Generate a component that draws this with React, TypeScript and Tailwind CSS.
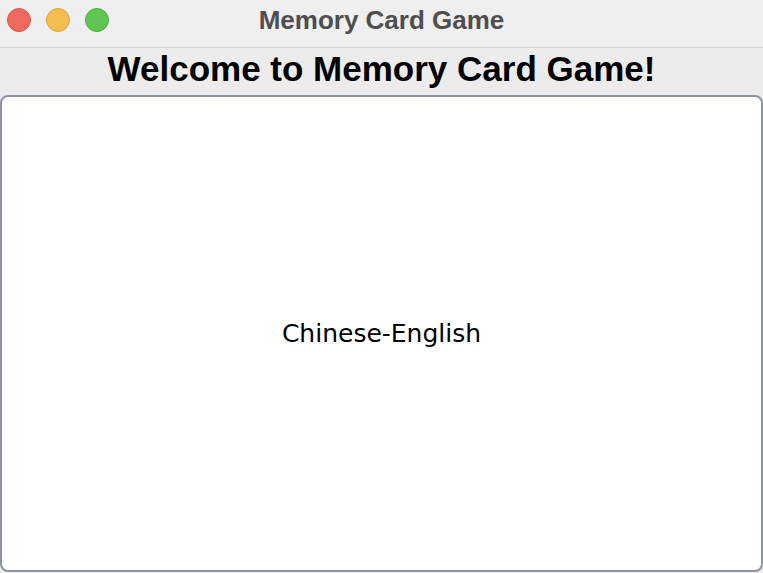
import React from 'react';

const TrafficLights: React.FC = () => (
  <div className="absolute left-[7px] top-[8px] flex gap-[15px]">
    <span className="block w-[24px] h-[24px] rounded-full bg-[#ee6a5f] border border-[#d9574c]" />
    <span className="block w-[24px] h-[24px] rounded-full bg-[#f5bd4f] border border-[#dea43b]" />
    <span className="block w-[24px] h-[24px] rounded-full bg-[#61c554] border border-[#50ab44]" />
  </div>
);

export default function App() {
  return (
    <div className="w-[763px] h-[573px] bg-[#ececec] flex flex-col overflow-hidden">
      {/* Title bar */}
      <div className="relative h-[48px] shrink-0 bg-[#efefef] border-b border-[#d6d6d6] flex items-center justify-center pb-[7px]">
        <TrafficLights />
        <span
          className="text-[26px] font-bold text-[#4e4e4e] leading-none"
          style={{ fontFamily: '"Liberation Sans", Arial, sans-serif' }}
        >
          Memory Card Game
        </span>
      </div>

      {/* Header */}
      <div className="h-[47px] shrink-0 flex items-center justify-center pb-[6px]">
        <h1
          className="text-[35px] font-bold text-black leading-none"
          style={{ fontFamily: '"Liberation Sans", Arial, sans-serif' }}
        >
          Welcome to Memory Card Game!
        </h1>
      </div>

      {/* Card button */}
      <div className="flex-1 pb-[1px]">
        <button
          type="button"
          className="w-full h-full bg-white rounded-[8px] border-2 border-[#8c94a4] flex items-center justify-center"
        >
          <span
            className="text-[25px] text-black"
            style={{ fontFamily: '"DejaVu Sans", Verdana, sans-serif' }}
          >
            Chinese-English
          </span>
        </button>
      </div>
    </div>
  );
}
